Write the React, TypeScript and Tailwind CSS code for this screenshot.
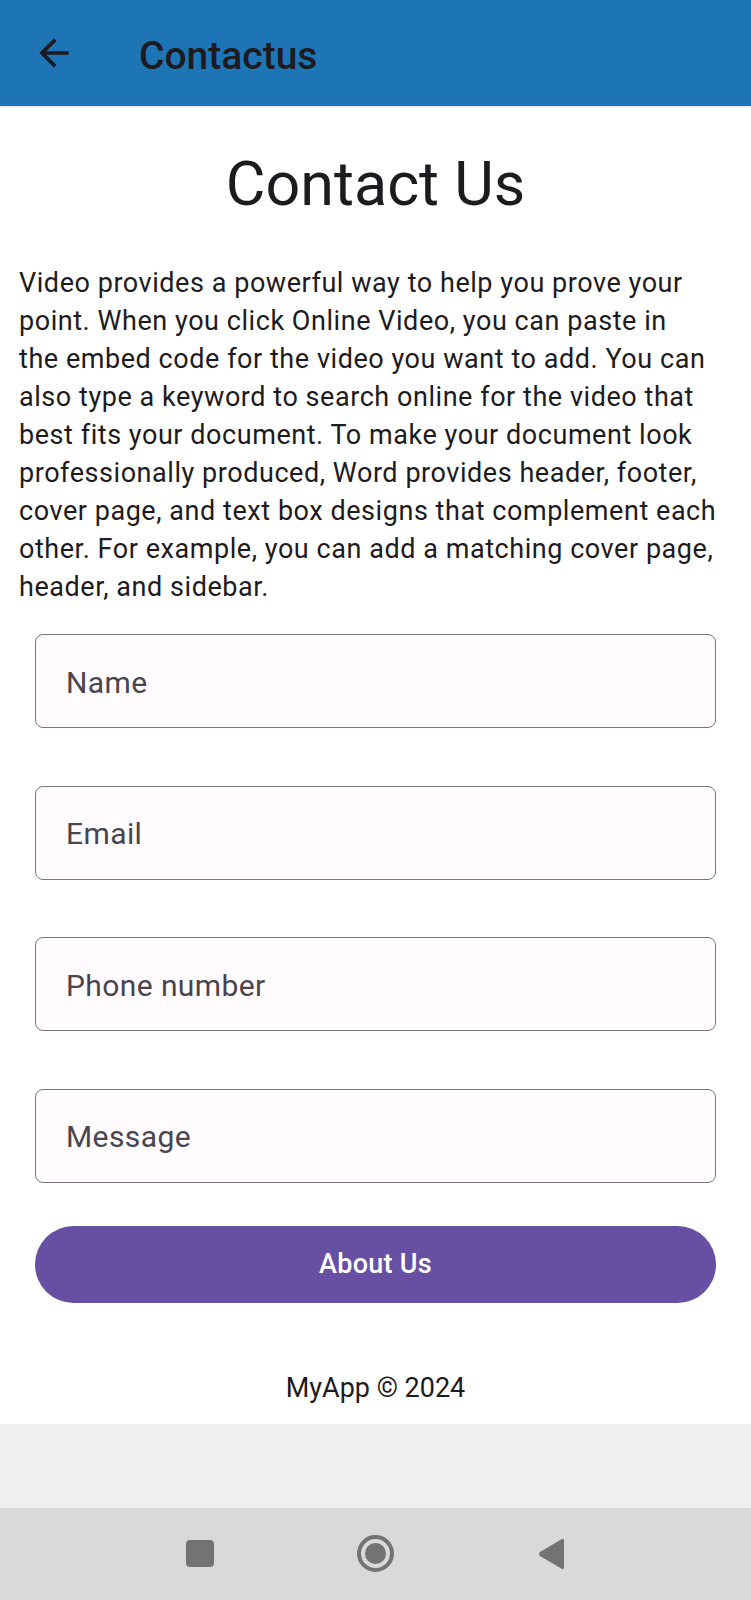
import React from "react";

function BackArrow() {
  return (
    <svg width="44" height="44" viewBox="0 0 24 24" fill="#1d1b20" aria-hidden="true">
      <path d="M20 11H7.83l5.59-5.59L12 4l-8 8 8 8 1.41-1.41L7.83 13H20v-2z" />
    </svg>
  );
}

function Field({ label }: { label: string }) {
  return (
    <div className="h-[94px] rounded-[8px] border-[1.5px] border-[#79747e] bg-[#fffbfe] flex items-center pl-[30px] pt-[3px]">
      <span className="text-[30px] tracking-[0.4px] text-[#49454f] leading-none">{label}</span>
    </div>
  );
}

const lines = [
  "Video provides a powerful way to help you prove your",
  "point. When you click Online Video, you can paste in",
  "the embed code for the video you want to add. You can",
  "also type a keyword to search online for the video that",
  "best fits your document. To make your document look",
  "professionally produced, Word provides header, footer,",
  "cover page, and text box designs that complement each",
  "other. For example, you can add a matching cover page,",
  "header, and sidebar.",
];

export default function App() {
  return (
    <div className="w-[751px] min-h-[1600px] flex flex-col bg-white font-['Roboto',sans-serif] text-[#1d1b20]">
      <header className="h-[106px] bg-[#1e75b6] flex items-center shadow-[0_1px_2px_rgba(0,0,0,0.15)] relative z-10">
        <div className="w-[139px] flex items-center pl-[32px]">
          <BackArrow />
        </div>
        <h1 className="text-[39px] leading-none text-[#1d1b20] font-medium pt-[6px]">Contactus</h1>
      </header>

      <main className="flex flex-col">
        <h2 className="pt-[48px] text-center text-[61px] leading-[60px] font-normal">Contact Us</h2>
        <p className="mt-[50px] px-[19px] text-[27px] leading-[38px] tracking-[0.55px] whitespace-nowrap">
          {lines.map((l, i) => (
            <React.Fragment key={i}>
              {l}
              {i < lines.length - 1 ? <br /> : null}
            </React.Fragment>
          ))}
        </p>

        <div className="mt-[28px] mx-[35px] flex flex-col gap-[57.5px]">
          <Field label="Name" />
          <Field label="Email" />
          <Field label="Phone number" />
          <Field label="Message" />
        </div>

        <button className="mt-[43px] mx-[35px] h-[77px] rounded-full bg-[#6750a4] text-white text-[27px] tracking-[0.3px] font-medium">
          About Us
        </button>

        <div className="h-[121px] flex items-center justify-center pt-[50px]">
          <span className="text-[27px] leading-none">MyApp © 2024</span>
        </div>
      </main>

      <div className="h-[84px] bg-[#f0f0f0]" />

      <nav className="h-[92px] bg-[#d9d9d9] flex items-center justify-center">
        <div className="w-[28px] h-[27px] rounded-[4px] bg-[#737373]" />
        <div className="ml-[143px] w-[37px] h-[37px] rounded-full border-[4px] border-[#737373] flex items-center justify-center">
          <div className="w-[21px] h-[21px] rounded-full bg-[#737373]" />
        </div>
        <svg className="ml-[143px]" width="28" height="34" viewBox="0 0 28 34" aria-hidden="true">
          <path d="M25 2 Q27 1 27 4 L27 30 Q27 33 25 32 L3 19 Q1 17 3 15 Z" fill="#737373" />
        </svg>
      </nav>
    </div>
  );
}
